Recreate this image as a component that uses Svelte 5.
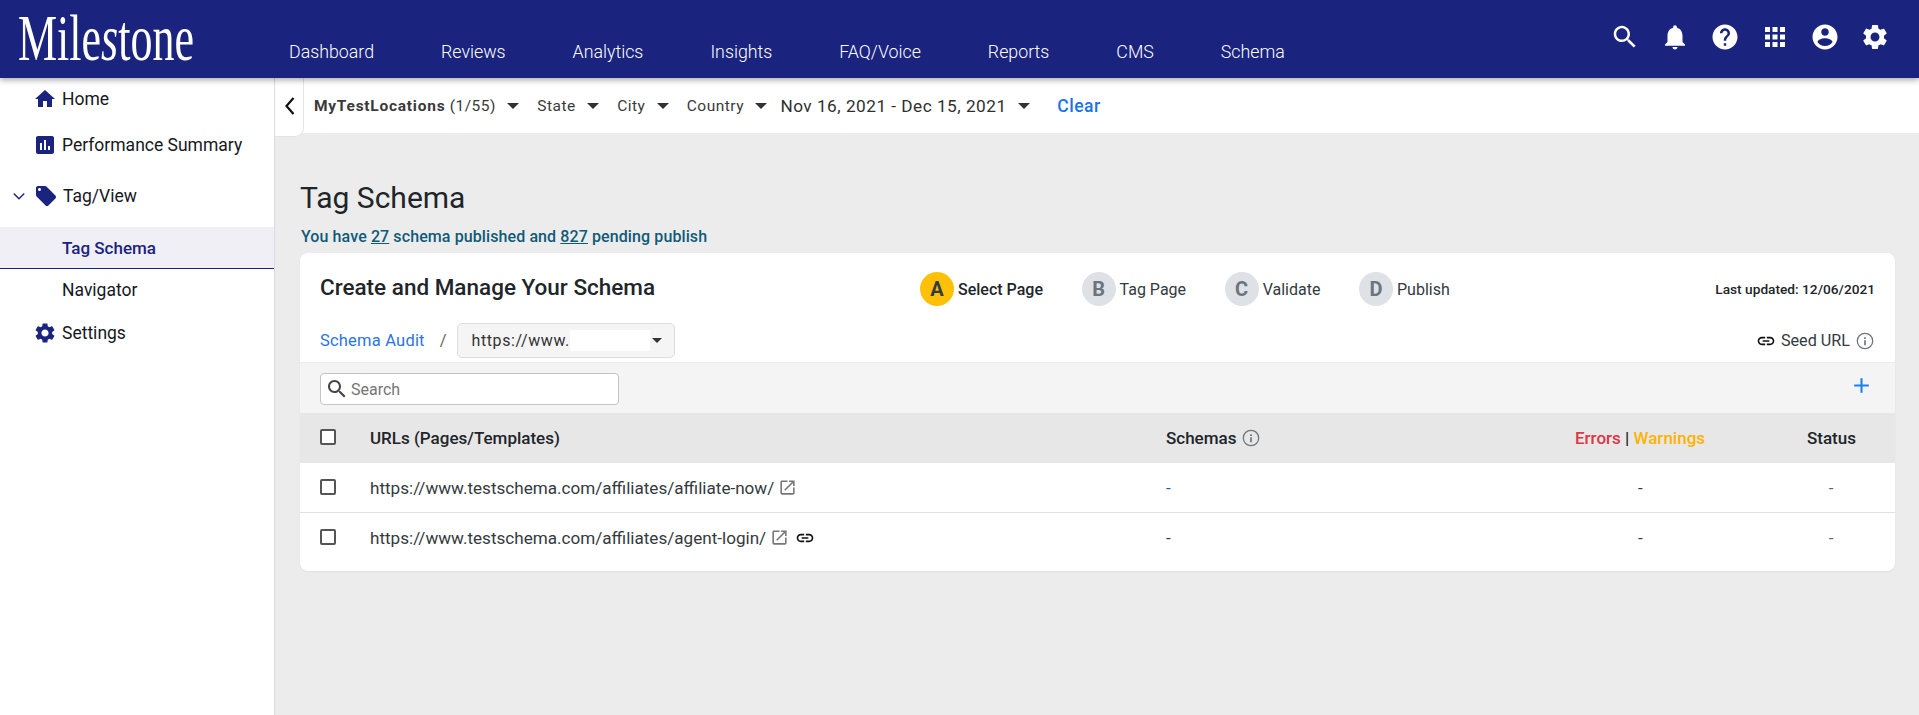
<script>
  const icons = {
    home: 'M10 20v-6h4v6h5v-8h3L12 3 2 12h3v8z',
    chart: 'M19 3H5c-1.1 0-2 .9-2 2v14c0 1.1.9 2 2 2h14c1.1 0 2-.9 2-2V5c0-1.1-.9-2-2-2zM9 17H7v-7h2v7zm4 0h-2V7h2v10zm4 0h-2v-4h2v4z',
    tag: 'M21.41 11.58l-9-9C12.05 2.22 11.55 2 11 2H4c-1.1 0-2 .9-2 2v7c0 .55.22 1.05.59 1.42l9 9c.36.36.86.58 1.41.58.55 0 1.05-.22 1.41-.59l7-7c.37-.36.59-.86.59-1.41 0-.55-.23-1.06-.59-1.42zM5.5 7C4.67 7 4 6.33 4 5.5S4.67 4 5.5 4 7 4.67 7 5.5 6.33 7 5.5 7z',
    settings: 'M19.14 12.94c.04-.3.06-.61.06-.94 0-.32-.02-.64-.07-.94l2.03-1.58c.18-.14.23-.41.12-.61l-1.92-3.32c-.12-.22-.37-.29-.59-.22l-2.39.96c-.5-.38-1.03-.7-1.62-.94l-.36-2.54c-.04-.24-.24-.41-.48-.41h-3.84c-.24 0-.43.17-.47.41l-.36 2.54c-.59.24-1.13.57-1.62.94l-2.39-.96c-.22-.08-.47 0-.59.22L2.74 8.87c-.12.21-.08.47.12.61l2.03 1.58c-.05.3-.09.63-.09.94s.02.64.07.94l-2.03 1.58c-.18.14-.23.41-.12.61l1.92 3.32c.12.22.37.29.59.22l2.39-.96c.5.38 1.03.7 1.62.94l.36 2.54c.05.24.24.41.48.41h3.84c.24 0 .44-.17.47-.41l.36-2.54c.59-.24 1.13-.56 1.62-.94l2.39.96c.22.08.47 0 .59-.22l1.92-3.32c.12-.22.07-.47-.12-.61l-2.01-1.58zM12 15.6c-1.98 0-3.6-1.62-3.6-3.6s1.62-3.6 3.6-3.6 3.6 1.62 3.6 3.6-1.62 3.6-3.6 3.6z',
    search: 'M15.5 14h-.79l-.28-.27C15.41 12.59 16 11.11 16 9.5 16 5.91 13.09 3 9.5 3S3 5.91 3 9.5 5.91 16 9.5 16c1.61 0 3.09-.59 4.23-1.57l.27.28v.79l5 4.99L20.49 19l-4.99-5zm-6 0C7.01 14 5 11.99 5 9.5S7.01 5 9.5 5 14 7.01 14 9.5 11.99 14 9.5 14z',
    bell: 'M12 22c1.1 0 2-.9 2-2h-4c0 1.1.89 2 2 2zm6-6v-5c0-3.07-1.64-5.64-4.5-6.32V4c0-.83-.67-1.5-1.5-1.5s-1.5.67-1.5 1.5v.68C7.63 5.36 6 7.92 6 11v5l-2 2v1h16v-1l-2-2z',
    help: 'M12 2C6.48 2 2 6.48 2 12s4.48 10 10 10 10-4.48 10-10S17.52 2 12 2zm1 17h-2v-2h2v2zm2.07-7.75l-.9.92C13.45 12.9 13 13.5 13 15h-2v-.5c0-1.1.45-2.1 1.17-2.83l1.24-1.26c.37-.36.59-.86.59-1.41 0-1.1-.9-2-2-2s-2 .9-2 2H8c0-2.21 1.79-4 4-4s4 1.79 4 4c0 .88-.36 1.68-.93 2.25z',
    apps: 'M4 8h4V4H4v4zm6 12h4v-4h-4v4zm-6 0h4v-4H4v4zm0-6h4v-4H4v4zm6 0h4v-4h-4v4zm6-10v4h4V4h-4zm-6 4h4V4h-4v4zm6 6h4v-4h-4v4zm0 6h4v-4h-4v4z',
    account: 'M12 2C6.48 2 2 6.48 2 12s4.48 10 10 10 10-4.48 10-10S17.52 2 12 2zm0 3c1.66 0 3 1.34 3 3s-1.34 3-3 3-3-1.34-3-3 1.34-3 3-3zm0 14.2c-2.5 0-4.71-1.28-6-3.22.03-1.99 4-3.08 6-3.08 1.99 0 5.97 1.09 6 3.08-1.29 1.94-3.5 3.22-6 3.22z',
    link: 'M3.9 12c0-1.71 1.39-3.1 3.1-3.1h4V7H7c-2.76 0-5 2.24-5 5s2.24 5 5 5h4v-1.9H7c-1.71 0-3.1-1.39-3.1-3.1zM8 13h8v-2H8v2zm9-6h-4v1.9h4c1.71 0 3.1 1.39 3.1 3.1s-1.39 3.1-3.1 3.1h-4V17h4c2.76 0 5-2.24 5-5s-2.24-5-5-5z',
    open: 'M19 19H5V5h7V3H5c-1.11 0-2 .9-2 2v14c0 1.1.89 2 2 2h14c1.1 0 2-.9 2-2v-7h-2v7zM14 3v2h3.59l-9.83 9.83 1.41 1.41L19 6.41V10h2V3h-7z',
    plus: 'M19 13h-6v6h-2v-6H5v-2h6V5h2v6h6v2z',
    info: 'M12 2a10 10 0 1 0 0 20 10 10 0 0 0 0-20zm0 1.5a8.5 8.5 0 1 1 0 17 8.5 8.5 0 0 1 0-17zM11 11h2v6h-2zM11 7.5h2v2h-2z'
  };

  const navItems = ['Dashboard', 'Reviews', 'Analytics', 'Insights', 'FAQ/Voice', 'Reports', 'CMS', 'Schema'];
  const headerIcons = ['search', 'bell', 'help', 'apps', 'account', 'settings'];
  const steps = [
    { letter: 'A', label: 'Select Page', active: true },
    { letter: 'B', label: 'Tag Page' },
    { letter: 'C', label: 'Validate' },
    { letter: 'D', label: 'Publish' }
  ];
  const rows = [
    { url: 'https://www.testschema.com/affiliates/affiliate-now/', schema: '-', schemaLink: true },
    { url: 'https://www.testschema.com/affiliates/agent-login/', schema: '-', hasLink: true }
  ];
</script>

{#snippet icon(name, cls)}
  <svg class={cls} viewBox="0 0 24 24" fill="currentColor"><path d={icons[name]} /></svg>
{/snippet}

{#snippet caret()}
  <span class="caret"></span>
{/snippet}

<div class="page">
  <header class="topbar">
    <div class="logo">Mile<i>s</i>tone</div>
    <nav class="nav">
      {#each navItems as item}
        <span>{item}</span>
      {/each}
    </nav>
    <div class="top-icons">
      {#each headerIcons as name}
        {@render icon(name, 'top-icon')}
      {/each}
    </div>
  </header>

  <div class="body">
    <aside class="sidebar">
      <div class="side-row home">
        {@render icon('home', 'side-icon')}
        <span>Home</span>
      </div>
      <div class="side-row perf">
        {@render icon('chart', 'side-icon')}
        <span>Performance Summary</span>
      </div>
      <div class="side-row tagview">
        <svg class="chev" viewBox="0 0 16 10" fill="none" stroke="currentColor" stroke-width="1.6"><path d="M2 1.5l6 6 6-6" /></svg>
        {@render icon('tag', 'side-icon')}
        <span>Tag/View</span>
      </div>
      <div class="side-sub active">Tag Schema</div>
      <div class="side-sub">Navigator</div>
      <div class="side-row settings">
        {@render icon('settings', 'side-icon')}
        <span>Settings</span>
      </div>
    </aside>

    <main class="main">
      <div class="filters">
        <div class="toggle">
          <svg viewBox="0 0 12 20" fill="none" stroke="currentColor" stroke-width="2.2"><path d="M10 2L3 10l7 8" /></svg>
        </div>
        <div class="filter first"><b>MyTestLocations</b>&nbsp;(1/55) {@render caret()}</div>
        <div class="filter">State {@render caret()}</div>
        <div class="filter">City {@render caret()}</div>
        <div class="filter">Country {@render caret()}</div>
        <div class="filter date">Nov 16, 2021 - Dec 15, 2021 {@render caret()}</div>
        <div class="clear">Clear</div>
      </div>

      <div class="content">
        <h1>Tag Schema</h1>
        <p class="summary">You have <u>27</u> schema published and <u>827</u> pending publish</p>

        <section class="card">
          <div class="card-top">
            <div class="title-row">
              <h2>Create and Manage Your Schema</h2>
              <div class="steps">
                {#each steps as step}
                  <div class="step" class:active={step.active}>
                    <span class="circle">{step.letter}</span>
                    <span class="step-label">{step.label}</span>
                  </div>
                {/each}
              </div>
              <div class="updated">Last updated: 12/06/2021</div>
            </div>
            <div class="crumb-row">
              <span class="crumb">Schema Audit</span>
              <span class="slash">/</span>
              <div class="site-select">
                <span>https://www.</span>
                <span class="mask"></span>
                <span class="caret small"></span>
              </div>
              <div class="seed">
                {@render icon('link', 'seed-link')}
                <span>Seed URL</span>
                {@render icon('info', 'info')}
              </div>
            </div>
          </div>

          <div class="toolbar">
            <div class="search">
              {@render icon('search', 'search-icon')}
              <span>Search</span>
            </div>
            {@render icon('plus', 'plus')}
          </div>

          <div class="row head">
            <div class="col-check"><span class="check"></span></div>
            <div class="col-url">URLs (Pages/Templates)</div>
            <div class="col-schema">Schemas {@render icon('info', 'info')}</div>
            <div class="col-errors"><span class="err">Errors</span> | <span class="warn">Warnings</span></div>
            <div class="col-status">Status</div>
          </div>

          {#each rows as row}
            <div class="row item">
              <div class="col-check"><span class="check"></span></div>
              <div class="col-url">
                {row.url}
                {@render icon('open', 'open')}
                {#if row.hasLink}
                  {@render icon('link', 'row-link')}
                {/if}
              </div>
              <div class="col-schema" class:teal={row.schemaLink}>{row.schema}</div>
              <div class="col-errors center">-</div>
              <div class="col-status dim">-</div>
            </div>
          {/each}
        </section>
      </div>
    </main>
  </div>
</div>

<style>
  :global(body) {
    background: #ececec;
    font-family: Roboto, "Liberation Sans", sans-serif;
    color: #212529;
  }
  .page {
    display: flex;
    flex-direction: column;
    height: 715px;
    overflow: hidden;
  }

  .topbar {
    display: flex;
    align-items: flex-start;
    height: 78px;
    flex: none;
    background: #1a237e;
    color: #fff;
    box-shadow: 0 2px 6px rgba(0, 0, 0, 0.35);
    position: relative;
    z-index: 2;
  }
  .logo {
    width: 177px;
    flex: none;
    margin: 14px 0 0 18px;
    font-family: "Liberation Serif", serif;
    font-size: 44px;
    line-height: 50px;
    white-space: nowrap;
    transform: scaleY(1.5);
    transform-origin: left center;
  }
  .nav {
    display: flex;
    gap: 67px;
    margin: 41px 0 0 94px;
    font-size: 17.8px;
    font-weight: 300;
    line-height: 22px;
  }
  .top-icons {
    display: flex;
    gap: 20px;
    margin: 22px 29px 0 auto;
  }
  .top-icon {
    width: 30px;
    height: 30px;
  }

  .body {
    display: flex;
    flex: 1;
    min-height: 0;
  }
  .sidebar {
    width: 274px;
    flex: none;
    background: #fff;
    border-right: 1px solid #dcdcdc;
    font-size: 17.5px;
    color: #16181d;
  }
  .side-row {
    display: flex;
    align-items: center;
    height: 24px;
    padding-left: 33px;
    gap: 5px;
  }
  .home {
    margin-top: 9px;
  }
  .perf {
    margin-top: 22px;
  }
  .tagview {
    margin-top: 27px;
    padding-left: 12px;
  }
  .settings {
    margin-top: 11px;
  }
  .side-icon {
    width: 24px;
    height: 24px;
    color: #1a237e;
    flex: none;
  }
  .chev {
    width: 14px;
    height: 9px;
    color: #1a237e;
    margin-right: 3px;
  }
  .side-sub {
    display: flex;
    align-items: center;
    height: 40px;
    padding-left: 62px;
  }
  .side-sub.active {
    height: 41px;
    margin-top: 19px;
    margin-bottom: 1px;
    background: #f0eff5;
    border-bottom: 1px solid #1a237e;
    color: #1a237e;
    font-weight: 500;
    font-size: 17px;
  }

  .main {
    flex: 1;
    min-width: 0;
  }
  .filters {
    display: flex;
    align-items: center;
    height: 55px;
    background: #fff;
    font-size: 15.5px;
    letter-spacing: 0.5px;
    color: #3a3a3a;
  }
  .toggle {
    align-self: flex-start;
    display: flex;
    align-items: center;
    justify-content: center;
    width: 29px;
    height: 59px;
    box-sizing: border-box;
    padding-bottom: 3px;
    background: #fff;
    border-right: 1px solid #e4e4e4;
    border-bottom: 1px solid #e4e4e4;
    border-bottom-right-radius: 9px;
    color: #111;
    position: relative;
  }
  .toggle svg {
    width: 13px;
    height: 20px;
  }
  .filter {
    display: flex;
    align-items: center;
    white-space: pre;
    margin-right: 18px;
  }
  .filter.first {
    margin-left: 10px;
  }
  .filter b {
    font-weight: 700;
    letter-spacing: 0.75px;
  }
  .date {
    font-size: 17.2px;
    color: #2f2f2f;
    margin-right: 27px;
    margin-left: -5px;
  }
  .caret {
    display: inline-block;
    width: 0;
    height: 0;
    margin-left: 7px;
    border-left: 6px solid transparent;
    border-right: 6px solid transparent;
    border-top: 6px solid #333;
  }
  .caret.small {
    margin-left: 2px;
    border-left-width: 5px;
    border-right-width: 5px;
    border-top-width: 5px;
  }
  .clear {
    color: #1a73e8;
    font-size: 17.5px;
    font-weight: 500;
  }

  .content {
    padding: 0 24px 0 25px;
  }
  h1 {
    margin: 48px 0 0;
    font-size: 30px;
    font-weight: 400;
    line-height: 34px;
    color: #212529;
  }
  .summary {
    margin: 12px 0 0 1px;
    font-size: 16px;
    font-weight: 500;
    line-height: 20px;
    letter-spacing: 0.1px;
    color: #0f5a78;
  }
  .card {
    margin-top: 6px;
    padding-bottom: 9px;
    background: #fff;
    border-radius: 8px;
    overflow: hidden;
    box-shadow: 0 1px 2px rgba(0, 0, 0, 0.05);
  }
  .card-top {
    height: 110px;
    padding: 19px 20px 0;
    box-sizing: border-box;
    border-bottom: 1px solid #ececec;
  }
  .title-row {
    display: flex;
    align-items: center;
    height: 34px;
  }
  h2 {
    margin: 0 0 4px;
    width: 600px;
    flex: none;
    font-size: 22.5px;
    font-weight: 500;
    color: #212529;
  }
  .steps {
    display: flex;
    gap: 38.6px;
    font-size: 16px;
    color: #343a40;
  }
  .step {
    display: flex;
    align-items: center;
    gap: 4px;
  }
  .circle {
    display: flex;
    align-items: center;
    justify-content: center;
    width: 34px;
    height: 34px;
    border-radius: 50%;
    background: #dee2e6;
    color: #6c757d;
    font-size: 20px;
    font-weight: 700;
  }
  .step.active .circle {
    background: #ffc107;
    color: #343a40;
  }
  .step.active .step-label {
    color: #212529;
    font-weight: 500;
  }
  .updated {
    margin-left: auto;
    font-size: 13.7px;
    font-weight: 500;
  }
  .crumb-row {
    display: flex;
    align-items: center;
    margin-top: 17px;
    height: 35px;
    font-size: 16.5px;
  }
  .crumb {
    color: #2c74e4;
    letter-spacing: 0.2px;
  }
  .slash {
    margin: 0 10px 0 15px;
    color: #666;
  }
  .site-select {
    display: flex;
    align-items: center;
    width: 218px;
    height: 35px;
    box-sizing: border-box;
    padding: 0 14px;
    background: #f5f5f5;
    border: 1px solid #ddd;
    border-radius: 5px;
    font-size: 16px;
    letter-spacing: 0.6px;
    color: #333;
  }
  .mask {
    width: 80px;
    height: 21px;
    background: #fff;
    flex: none;
  }
  .seed {
    display: flex;
    align-items: center;
    margin-left: auto;
    gap: 5px;
    font-size: 16.2px;
    color: #343a40;
  }
  .seed-link {
    width: 20px;
    height: 20px;
    color: #111;
  }
  .info {
    width: 20px;
    height: 20px;
    color: #6c757d;
  }
  .toolbar {
    display: flex;
    align-items: center;
    justify-content: space-between;
    height: 50px;
    padding: 0 20px;
    background: #f4f4f4;
  }
  .search {
    display: flex;
    align-items: center;
    width: 299px;
    height: 32px;
    margin-top: 2px;
    box-sizing: border-box;
    padding-left: 4px;
    gap: 2px;
    background: #fff;
    border: 1px solid #c4c4c4;
    border-radius: 4px;
    font-size: 16px;
    color: #757575;
  }
  .search-icon {
    width: 24px;
    height: 24px;
    color: #444;
  }
  .plus {
    width: 25px;
    height: 25px;
    color: #1a7ff0;
    margin: 0 1px 6px 0;
  }

  .row {
    display: flex;
    align-items: center;
    padding-left: 20px;
  }
  .head {
    height: 50px;
    background: #e7e7e7;
    font-size: 17px;
    font-weight: 500;
  }
  .item {
    height: 49px;
    font-size: 17.1px;
    color: #343a40;
  }
  .item + .item {
    border-top: 1px solid #e0e0e8;
  }
  .col-check {
    width: 50px;
    flex: none;
  }
  .check {
    display: block;
    width: 16px;
    height: 16px;
    margin-top: -2px;
    box-sizing: border-box;
    border: 2px solid #555;
    border-radius: 2px;
    background: #fff;
  }
  .col-url {
    display: flex;
    align-items: center;
    gap: 4px;
    width: 796px;
    flex: none;
    white-space: nowrap;
  }
  .open {
    width: 19px;
    height: 19px;
    color: #777;
  }
  .row-link {
    width: 20px;
    height: 20px;
    color: #111;
    margin-left: 2px;
  }
  .col-schema {
    display: flex;
    align-items: center;
    gap: 5px;
    width: 409px;
    flex: none;
    white-space: nowrap;
  }
  .teal {
    color: #0a6aa8;
  }
  .col-errors {
    width: 232px;
    flex: none;
    white-space: pre;
  }
  .col-errors.center {
    padding-left: 63px;
    box-sizing: border-box;
  }
  .err {
    color: #dc3545;
  }
  .warn {
    color: #ffb300;
  }
  .col-status {
    width: 48px;
    text-align: center;
    flex: none;
  }
  .dim {
    color: #666;
  }
</style>
